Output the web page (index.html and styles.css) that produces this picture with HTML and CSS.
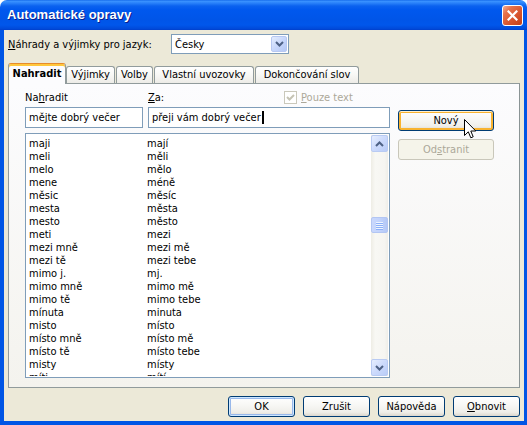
FILE: index.html
```html
<!DOCTYPE html>
<html lang="cs">
<head>
<meta charset="utf-8">
<title>Automatické opravy</title>
<link rel="stylesheet" href="styles.css">
</head>
<body>
<div class="window">
  <div class="titlebar">
    <span class="title">Automatické opravy</span>
    <span class="close"><svg width="11" height="11" viewBox="0 0 11 11"><path d="M1.5 1.5 L9.5 9.5 M9.5 1.5 L1.5 9.5" stroke="#fff" stroke-width="2.2" stroke-linecap="square"/></svg></span>
  </div>
  <div class="frame">
    <div class="client">
      <div class="langrow">
        <span class="langlabel"><u>N</u>áhrady a výjimky pro jazyk:</span>
        <div class="combo">
          <span class="combotext">Česky</span>
          <span class="dropbtn"><svg width="9" height="6" viewBox="0 0 9 6"><path d="M1 1 L4.5 4.5 L8 1" fill="none" stroke="#4D6185" stroke-width="2"/></svg></span>
        </div>
      </div>
      <div class="tabs">
        <div class="tab active t1">Nahradit</div>
        <div class="tab t2">Výjimky</div>
        <div class="tab t3">Volby</div>
        <div class="tab t4">Vlastní uvozovky</div>
        <div class="tab t5">Dokončování slov</div>
      </div>
      <div class="panel">
        <div class="main">
          <div class="labels">
            <span class="lab1">Na<u>h</u>radit</span>
            <span class="lab2"><u>Z</u>a:</span>
            <span class="chk">
              <span class="box"><svg width="11" height="11" viewBox="0 0 11 11"><path d="M2 5 L4.5 7.5 L9 3" fill="none" stroke="#C5C3B4" stroke-width="2"/></svg></span>
              <span class="chktext"><u>P</u>ouze text</span>
            </span>
          </div>
          <div class="inputs">
            <div class="input in1">mějte dobrý večer</div>
            <div class="input in2">přeji vám dobrý večer<span class="caret"></span></div>
          </div>
          <div class="list">
            <div class="rows">
              <div class="row"><span class="c1">maji</span><span>mají</span></div>
              <div class="row"><span class="c1">meli</span><span>měli</span></div>
              <div class="row"><span class="c1">melo</span><span>mělo</span></div>
              <div class="row"><span class="c1">mene</span><span>méně</span></div>
              <div class="row"><span class="c1">měsic</span><span>měsíc</span></div>
              <div class="row"><span class="c1">mesta</span><span>města</span></div>
              <div class="row"><span class="c1">mesto</span><span>město</span></div>
              <div class="row"><span class="c1">meti</span><span>mezi</span></div>
              <div class="row"><span class="c1">mezi mně</span><span>mezi mě</span></div>
              <div class="row"><span class="c1">mezi tě</span><span>mezi tebe</span></div>
              <div class="row"><span class="c1">mimo j.</span><span>mj.</span></div>
              <div class="row"><span class="c1">mimo mně</span><span>mimo mě</span></div>
              <div class="row"><span class="c1">mimo tě</span><span>mimo tebe</span></div>
              <div class="row"><span class="c1">mínuta</span><span>minuta</span></div>
              <div class="row"><span class="c1">misto</span><span>místo</span></div>
              <div class="row"><span class="c1">místo mně</span><span>místo mě</span></div>
              <div class="row"><span class="c1">místo tě</span><span>místo tebe</span></div>
              <div class="row"><span class="c1">misty</span><span>místy</span></div>
              <div class="row"><span class="c1">míti</span><span>mítí</span></div>
            </div>
            <div class="vscroll">
              <div class="sbtn"><svg width="9" height="6" viewBox="0 0 9 6"><path d="M1 5 L4.5 1.5 L8 5" fill="none" stroke="#4D6185" stroke-width="2"/></svg></div>
              <div class="track">
                <div class="thumb"><span></span><span></span><span></span><span></span></div>
              </div>
              <div class="sbtn"><svg width="9" height="6" viewBox="0 0 9 6"><path d="M1 1 L4.5 4.5 L8 1" fill="none" stroke="#4D6185" stroke-width="2"/></svg></div>
            </div>
          </div>
        </div>
        <div class="side">
          <div class="btn hot">Nový</div>
          <div class="btn disabled">Od<u>s</u>tranit</div>
        </div>
      </div>
      <div class="footer">
        <div class="btn fbtn default">OK</div>
        <div class="btn fbtn">Zrušit</div>
        <div class="btn fbtn">Nápověda</div>
        <div class="btn fbtn"><u>O</u>bnovit</div>
      </div>
    </div>
  </div>
  <svg class="cursor" width="13" height="21" viewBox="0 0 13 21"><path d="M0.5 0.5 L0.5 16.5 L4.3 12.8 L6.8 18.8 L9.2 17.8 L6.8 12 L11.8 12 Z" fill="#fff" stroke="#000" stroke-width="1" stroke-linejoin="miter"/></svg>
</div>
</body>
</html>
```

FILE: styles.css
```css
* { box-sizing: border-box; }
html, body { margin: 0; padding: 0; }
body {
  width: 527px;
  height: 425px;
  overflow: hidden;
  background: #ffffff;
  font-family: "DejaVu Sans Condensed", "Liberation Sans", sans-serif;
  font-size: 11px;
  color: #000;
}
u { text-decoration: underline; text-underline-offset: 1px; }

.window {
  position: relative;
  width: 527px;
  height: 425px;
  display: flex;
  flex-direction: column;
}

.titlebar {
  height: 30px;
  flex: none;
  display: flex;
  justify-content: space-between;
  align-items: flex-start;
  border-radius: 7px 7px 0 0;
  background: linear-gradient(#0A5FE6 0px, #3D95FF 1px, #2A82FA 3px, #0B62EF 6px, #0058EE 10px, #0055E8 20px, #0057EB 25px, #0049D8 29px, #003DC9 30px);
}
.title {
  padding: 7px 0 0 7px;
  font-family: "Liberation Sans", "DejaVu Sans", sans-serif;
  font-weight: bold;
  font-size: 13px;
  line-height: 16px;
  color: #fff;
  text-shadow: 1px 1px 0 #0A1E8C;
}
.close {
  margin: 5px 4px 0 0;
  width: 21px;
  height: 21px;
  border: 1px solid #fff;
  border-radius: 3px;
  display: flex;
  align-items: center;
  justify-content: center;
  background: linear-gradient(135deg, #F2AE96 0%, #E5724C 25%, #D8552E 60%, #C43F18 100%);
}

.frame {
  flex: 1;
  border-style: solid;
  border-color: #0055E5;
  border-width: 0 3px 4px 4px;
  background: #ECE9D8;
}
.client {
  height: 391px;
  padding: 4px 0 0 4px;
  display: flex;
  flex-direction: column;
}

.langrow {
  height: 20px;
  display: flex;
  align-items: center;
}
.langlabel {
  width: 163px;
  line-height: 13px;
}
.combo {
  width: 118px;
  height: 20px;
  border: 1px solid #7F9DB9;
  background: #fff;
  display: flex;
  align-items: center;
  justify-content: space-between;
}
.combotext { padding-left: 3px; }
.dropbtn {
  width: 16px;
  height: 16px;
  margin-right: 1px;
  border: 1px solid #B7C8F2;
  border-radius: 2px;
  background: linear-gradient(135deg, #E3ECFE 0%, #C8D7FB 50%, #B4C8F6 100%);
  display: flex;
  align-items: center;
  justify-content: center;
}

.tabs {
  margin-top: 9px;
  height: 20px;
  display: flex;
  align-items: flex-end;
}
.tab {
  height: 17px;
  border: 1px solid #919B9C;
  border-bottom: none;
  border-radius: 3px 3px 0 0;
  background: linear-gradient(#FFFFFF 0%, #F8F8F5 50%, #EDECE7 100%);
  text-align: center;
  line-height: 15px;
  margin-right: 1px;
}
.tab.active {
  height: 21px;
  margin-bottom: -1px;
  position: relative;
  z-index: 1;
  font-weight: bold;
  background: #FCFCFE;
  border-top: 1px solid #E68B2C;
  box-shadow: inset 0 2px 0 #FFC73C;
  line-height: 19px;
  margin-right: 0;
}
.t1 { width: 58px; }
.t2 { width: 49px; }
.t3 { width: 37px; }
.t4 { width: 100px; }
.t5 { width: 104px; }

.panel {
  width: 512px;
  height: 305px;
  border: 1px solid #919B9C;
  border-right-color: #8A9495;
  background: linear-gradient(#FCFCFE, #F4F3EE);
  display: flex;
  padding: 7px 0 0 16px;
}
.main { width: 365px; }
.labels {
  height: 13px;
  display: flex;
  align-items: center;
  line-height: 13px;
}
.lab1 { width: 123px; }
.lab2 { width: 136px; }
.chk { display: flex; align-items: center; }
.box {
  width: 13px;
  height: 13px;
  border: 1px solid #CAC8BB;
  background: #FFFFFF;
  display: flex;
  align-items: center;
  justify-content: center;
}
.chktext { margin-left: 4px; color: #ACA899; }

.inputs {
  margin-top: 3px;
  display: flex;
  gap: 5px;
}
.input {
  height: 21px;
  border: 1px solid #7F9DB9;
  background: #fff;
  padding-left: 3px;
  display: flex;
  align-items: center;
  white-space: nowrap;
}
.in1 { width: 118px; }
.in2 { width: 242px; }
.caret {
  display: inline-block;
  width: 2px;
  height: 13px;
  background: #000;
  margin-left: 1px;
}

.list {
  margin-top: 5px;
  height: 245px;
  border: 1px solid #7F9DB9;
  background: #fff;
  padding: 1px;
  display: flex;
}
.rows {
  flex: 1;
  overflow: hidden;
  padding: 2px 0 0 2px;
}
.row {
  height: 13px;
  line-height: 13px;
  display: flex;
  white-space: nowrap;
}
.c1 { width: 118px; }

.vscroll {
  width: 17px;
  display: flex;
  flex-direction: column;
  background: linear-gradient(to right, #EEEDE5 0, #F8F8F4 25%, #F6F5F1 80%, #EFEEE8 100%);
}
.sbtn {
  height: 17px;
  width: 17px;
  border: 1px solid #B9CBF3;
  border-radius: 2px;
  background: linear-gradient(135deg, #E6EEFE 0%, #CCDAFC 50%, #B9CCF7 100%);
  display: flex;
  align-items: center;
  justify-content: center;
  flex: none;
}
.track { flex: 1; }
.thumb {
  margin-top: 65px;
  height: 16px;
  border: 1px solid #B3C6F3;
  border-radius: 2px;
  background: linear-gradient(to right, #C9D8FC 0%, #C2D3FC 50%, #B4C8F6 100%);
  display: flex;
  flex-direction: column;
  align-items: center;
  justify-content: center;
  gap: 1px;
}
.thumb span {
  display: block;
  width: 7px;
  height: 1px;
  background: #EEF4FE;
  box-shadow: 0 1px 0 #8CB0F8;
}

.side {
  margin-left: 8px;
  padding-top: 19px;
  width: 96px;
  display: flex;
  flex-direction: column;
  gap: 8px;
}

.btn {
  height: 21px;
  border: 1px solid #003C74;
  border-radius: 3px;
  background: linear-gradient(#FFFFFF 0%, #F7F7F4 45%, #EFEEE9 80%, #DCD7CD 100%);
  text-align: center;
  line-height: 19px;
  white-space: nowrap;
}
.btn.hot {
  box-shadow: inset 0 1px 0 #FFF0CF, inset 0 0 0 2px #F8B330, inset 0 -1px 0 #E5A01A;
}
.btn.disabled {
  border-color: #C9C7BA;
  background: #F5F4EA;
  color: #ACA899;
}
.btn.default {
  box-shadow: inset 0 0 0 1px #CEE7FF, inset 0 0 0 2px #98B8EA;
}

.footer {
  margin-top: 8px;
  display: flex;
  gap: 8px;
  justify-content: flex-end;
  padding-right: 4px;
}
.fbtn { width: 67px; }

.cursor {
  position: absolute;
  left: 464px;
  top: 119px;
}
```
